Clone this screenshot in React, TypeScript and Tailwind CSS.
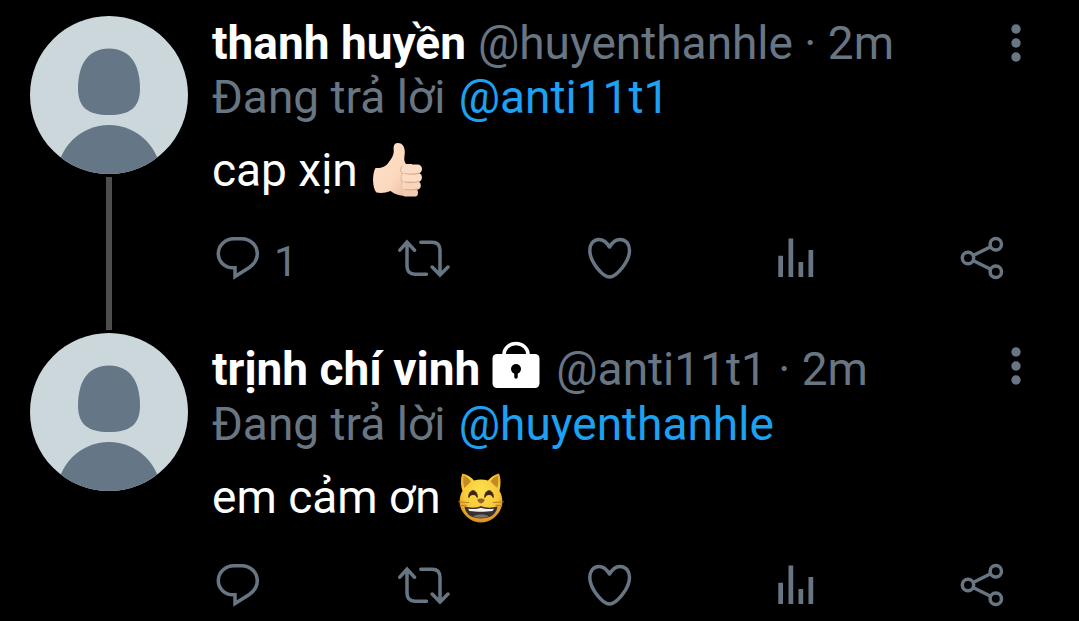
import type { ReactNode } from 'react';

type Tweet = {
  id: number;
  name: string;
  locked?: boolean;
  handle: string;
  time: string;
  replyTo: string;
  text: string;
  emoji: ReactNode;
  replies?: number;
};

function Avatar() {
  return (
    <svg viewBox="0 0 158 158" className="block w-full rounded-full bg-[#ccd7db]" aria-hidden="true">
      <path
        d="M79 32.500c21 0 31 16 31 40 0 19-10 26.500-31 26.500S48 91.500 48 72.500c0-24 10-40 31-40z"
        fill="#657786"
      />
      <circle cx="79" cy="161" r="52" fill="#657786" />
    </svg>
  );
}

function LockIcon() {
  return (
    <svg viewBox="0 0 48 48" className="size-12 shrink-0" role="img" aria-label="Locked">
      <path d="M12 15v-1.500a12 11 0 0 1 24 0V15" fill="none" stroke="#fff" strokeWidth="3.600" />
      <rect x="0.500" y="13" width="47" height="34" rx="4.500" fill="#fff" />
      <circle cx="24" cy="28" r="5" fill="#000" />
      <path d="M24 29v7" stroke="#000" strokeWidth="3.500" strokeLinecap="round" />
    </svg>
  );
}

function ThumbsUp() {
  return (
    <svg viewBox="0 0 52 56" className="h-14 w-[52px]" role="img" aria-label="👍🏻">
      <defs>
        <linearGradient id="skin" x1="0" y1="0" x2="1" y2="1">
          <stop offset="0" stopColor="#fde0c8" />
          <stop offset="0.600" stopColor="#fbd9be" />
          <stop offset="1" stopColor="#e9b99c" />
        </linearGradient>
      </defs>
      <path
        d="M3.500 26C9 26.500 13.500 25 16.500 20.500 19.500 17 21.800 13 21.800 9 21.500 6 21 1.500 25.500 1 31 .8 33 6 32.800 10.500 32.600 15 31.200 18.500 34 22H40V54C32 54.500 24 53.500 18.500 49 14 51 8.500 51.500 4.500 50.500.2 46 0 32 3.500 26z"
        fill="url(#skin)"
      />
      <path d="M30.500 24c-2.500 3-2 6 .3 8-2.200 2-2.200 5.500 0 8-1.500 3-.8 5.500 1 7.500" fill="none" stroke="#e3b495" strokeWidth="1.200" />
      <rect x="29.500" y="22.500" width="20.500" height="9" rx="4.500" fill="#fbdcc4" />
      <rect x="29.500" y="31" width="20.500" height="9" rx="4.500" fill="#fbdcc4" />
      <rect x="29.800" y="39.500" width="19" height="8" rx="4" fill="#f9d5bb" />
      <rect x="30.500" y="47" width="15.500" height="7.500" rx="3.600" fill="#f4cbb0" />
      <path d="M33 31.500c5 .8 10 .8 14-.3M33 39.800c5 .8 10 .8 14-.3M33.500 47.500c5 .7 8 .6 12-.3" fill="none" stroke="#dcab8c" strokeWidth="1.200" strokeLinecap="round" />
    </svg>
  );
}

function GrinningCat() {
  return (
    <svg viewBox="0 0 52 52" className="size-[52px]" role="img" aria-label="😸">
      <defs>
        <radialGradient id="fur" cx="0.500" cy="0.350" r="0.650">
          <stop offset="0" stopColor="#fde04e" />
          <stop offset="0.650" stopColor="#f8c838" />
          <stop offset="1" stopColor="#d98f1c" />
        </radialGradient>
      </defs>
      <path
        d="M7.500 20C5.500 14 5.500 7 7.300 2.500 12 3.500 16 6 19 9.500c4.500-1.200 9.500-1.200 14 0C36 6 40 3.500 44 2.500c2 4.500 2 11.500.5 17.500C47 24 47.500 28 47.300 32 46.500 43 36 51.500 26 51.500S5.500 43 4.700 32C4.500 28 5 24 7.500 20z"
        fill="url(#fur)"
      />
      <path d="M8.800 4.800C12 6 14.500 8 16 10.500L9.300 17C8 13 8 8.500 8.800 4.800zM42.700 4.800C39.500 6 37 8 35.500 10.500l6.700 6.500c1.300-4 1.300-8.500.5-12.200z" fill="#c48a24" />
      <path d="M13.800 26.500c-.5-9 9-9 8.400 0-1.400-4-6.800-4-8.400 0zM29.800 26.500c-.5-9 9-9 8.400 0-1.400-4-6.800-4-8.400 0z" fill="#3d2410" stroke="#3d2410" strokeLinejoin="round" />
      <path d="M22.500 28.300c1.500-1 5.500-1 7 0 .5 1.700-2 4.200-3.500 4.200s-4-2.500-3.500-4.200z" fill="#99602c" />
      <path d="M9.500 35.500c6 1.700 12 1.500 16.500-.5 4.500 2 10.500 2.200 16.500.5-1 8-7.500 12-16.500 12s-15.500-4-16.500-12z" fill="#38302e" />
      <path d="M13 37.800c5 .6 10 .2 13-1 3 1.200 8 1.600 13 1l-1.500 2.200c-7 1-16 1-23 0z" fill="#f4f1ec" />
      <path d="M18 45.300c4-2.500 12-2.500 16 0-4 2-12 2-16 0z" fill="#777170" />
      <path d="M3.500 30.800l10 .8M5 34.800l6-.6M48.500 30.800l-10 .8M47 34.800l-6-.6" stroke="#a8782a" strokeWidth="0.900" strokeLinecap="round" />
    </svg>
  );
}

const ICON = 'h-12 w-[52px] fill-none stroke-[#687684] stroke-[3.5]';

const ACTIONS = [
  {
    label: 'Reply',
    icon: (
      <svg viewBox="0 0 52 48" className={ICON}>
        <path d="M22 4.800h7.500c9 0 15.800 6.500 15.800 15 0 6-3 10.200-8 13.700L23 42.500v-8.700h-1.500C12.500 33.800 6.300 27.500 6.300 19.500S13 4.800 22 4.800z" />
      </svg>
    ),
  },
  {
    label: 'Retweet',
    icon: (
      <svg viewBox="0 0 52 48" className={ICON} strokeLinecap="round">
        <path d="M1.800 16.200L9 8l7.500 8.200M9 8.500V32c0 5.500 2.500 8.200 8 8.200h11.500M22.800 8.200H34c5.500 0 8 2.700 8 8.200v24M34.200 33l7.800 8 8-8" />
      </svg>
    ),
  },
  {
    label: 'Like',
    icon: (
      <svg viewBox="0 0 52 48" className={ICON} strokeLinejoin="round">
        <path d="M25.500 13C22 7 18.500 5.400 15 5.400 9 5.400 5.800 10.500 5.800 16.500 5.800 28 19 43 25.500 43S45.500 28 45.500 16.500c0-6-3.200-11.100-9.500-11.100-3.500 0-7 1.600-10.500 7.600z" />
      </svg>
    ),
  },
  {
    label: 'View activity',
    icon: (
      <svg viewBox="0 0 52 48" className="h-12 w-[52px] fill-[#687684]">
        <path d="M8.300 21.700H13V43H8.300zM18.500 4.500h4.700V43h-4.700zM28.500 28h4.700v15h-4.700zM38.500 16h4.700v27h-4.700z" />
      </svg>
    ),
  },
  {
    label: 'Share',
    icon: (
      <svg viewBox="0 0 52 48" className={ICON}>
        <circle cx="12" cy="24" r="5.700" />
        <circle cx="39.800" cy="10.300" r="5.700" />
        <circle cx="39.800" cy="37.700" r="5.700" />
        <path d="M17 21.500l17.700-8.700M17 26.500l17.700 8.700" />
      </svg>
    ),
  },
];

const TWEETS: Tweet[] = [
  {
    id: 1,
    name: 'thanh huyền',
    handle: 'huyenthanhle',
    time: '2m',
    replyTo: 'anti11t1',
    text: 'cap xịn',
    emoji: <ThumbsUp />,
    replies: 1,
  },
  {
    id: 2,
    name: 'trịnh chí vinh',
    locked: true,
    handle: 'anti11t1',
    time: '2m',
    replyTo: 'huyenthanhle',
    text: 'em cảm ơn',
    emoji: <GrinningCat />,
  },
];

function TweetRow({ tweet, threaded }: { tweet: Tweet; threaded: boolean }) {
  return (
    <article className="flex gap-6 pl-[30px] pr-[58px]">
      <div className="flex w-[158px] shrink-0 flex-col items-center">
        <Avatar />
        {threaded && <div className="my-[3px] w-1.5 flex-1 bg-[#4d4d4d]" />}
      </div>

      <div className="min-w-0 flex-1">
        <header className="flex items-start justify-between">
          <div className={`flex items-center whitespace-nowrap ${tweet.locked ? 'pt-2' : ''}`}>
            <h2 className="font-bold text-white">{tweet.name}</h2>
            {tweet.locked && <span className="ml-3 mr-1 flex h-14 items-start"><LockIcon /></span>}
            <span className="ml-3">@{tweet.handle} · {tweet.time}</span>
          </div>
          <button type="button" aria-label="More" className={tweet.locked ? 'mt-3.5' : 'mt-2'}>
            <svg viewBox="0 0 10 38" className="h-[38px] w-2.5 fill-[#687684]">
              <circle cx="5" cy="5" r="4.700" />
              <circle cx="5" cy="19" r="4.700" />
              <circle cx="5" cy="33" r="4.700" />
            </svg>
          </button>
        </header>
        <p>
          Đang trả lời <a href="#" className="ml-0.5 text-[#1da1f2]">@{tweet.replyTo}</a>
        </p>
        <div className="mt-[18px] flex h-14 items-center gap-3.5 text-white">
          <p>{tweet.text}</p>
          {tweet.emoji}
        </div>
        <div className="mt-9 flex pr-[13px]">
          {ACTIONS.map(action => (
            <div key={action.label} className="flex-1 last:flex-none">
              <button type="button" aria-label={action.label} className="flex items-center gap-2.5">
                {action.icon}
                {action.label === 'Reply' && tweet.replies && <span className="h-12 pt-1 text-[42px] leading-[48px]">{tweet.replies}</span>}
              </button>
            </div>
          ))}
        </div>
        {threaded && <div className="h-[51px]" />}
      </div>
    </article>
  );
}

export default function App() {
  return (
    <main className="min-h-screen overflow-hidden bg-black pt-4 font-['Roboto',sans-serif] text-[46px] leading-[54px] text-[#687684]">
      {TWEETS.map((tweet, i) => (
        <TweetRow key={tweet.id} tweet={tweet} threaded={i < TWEETS.length - 1} />
      ))}
    </main>
  );
}
